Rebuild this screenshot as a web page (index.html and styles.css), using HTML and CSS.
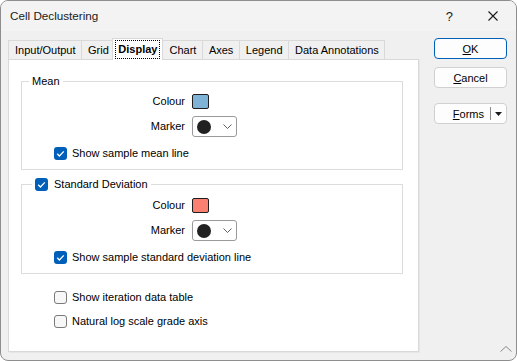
FILE: index.html
```html
<!DOCTYPE html>
<html>
<head>
<meta charset="utf-8">
<link rel="stylesheet" href="styles.css">
</head>
<body>
<div class="window">
  <div class="titlebar">
    <span class="title">Cell Declustering</span>
    <span class="help">?</span>
    <span class="close"><svg width="10" height="10" viewBox="0 0 10 10"><path d="M0.5 0.5 L9.5 9.5 M9.5 0.5 L0.5 9.5" stroke="#1a1a1a" stroke-width="1.1" fill="none"/></svg></span>
  </div>
  <div class="body">
    <div class="main">
      <div class="tabs">
        <div class="tab">Input/Output</div>
        <div class="tab">Grid</div>
        <div class="tab active"><span class="focus">Display</span></div>
        <div class="tab">Chart</div>
        <div class="tab">Axes</div>
        <div class="tab">Legend</div>
        <div class="tab">Data Annotations</div>
      </div>
      <div class="panel">
        <fieldset class="group">
          <legend class="legend legend-text">Mean</legend>
          <div class="fields">
            <span class="lbl">Colour</span><span class="swatch swatch-blue"></span>
            <span class="lbl">Marker</span>
            <span class="combo"><span class="dot"></span><svg class="chev" width="9" height="5" viewBox="0 0 9 5"><path d="M0.5 0.5 L4.5 4.5 L8.5 0.5" stroke="#606060" stroke-width="1" fill="none"/></svg></span>
          </div>
          <div class="check check-in"><span class="box checked"><svg width="13" height="13" viewBox="0 0 13 13"><path d="M3.2 6.8 L5.4 9 L9.8 4.4" stroke="#fff" stroke-width="1.3" fill="none"/></svg></span>Show sample mean line</div>
        </fieldset>
        <fieldset class="group group-sd">
          <legend class="legend legend-check"><span class="check"><span class="box checked"><svg width="13" height="13" viewBox="0 0 13 13"><path d="M3.2 6.8 L5.4 9 L9.8 4.4" stroke="#fff" stroke-width="1.3" fill="none"/></svg></span>Standard Deviation</span></legend>
          <div class="fields fields-sd">
            <span class="lbl">Colour</span><span class="swatch swatch-red"></span>
            <span class="lbl">Marker</span>
            <span class="combo"><span class="dot"></span><svg class="chev" width="9" height="5" viewBox="0 0 9 5"><path d="M0.5 0.5 L4.5 4.5 L8.5 0.5" stroke="#606060" stroke-width="1" fill="none"/></svg></span>
          </div>
          <div class="check check-in"><span class="box checked"><svg width="13" height="13" viewBox="0 0 13 13"><path d="M3.2 6.8 L5.4 9 L9.8 4.4" stroke="#fff" stroke-width="1.3" fill="none"/></svg></span>Show sample standard deviation line</div>
        </fieldset>
        <div class="options">
          <div class="check"><span class="box"></span>Show iteration data table</div>
          <div class="check"><span class="box"></span>Natural log scale grade axis</div>
        </div>
      </div>
    </div>
    <div class="buttons">
      <div class="btn btn-default"><u>O</u>K</div>
      <div class="btn"><u>C</u>ancel</div>
      <div class="btn btn-split"><span class="split-text"><u>F</u>orms</span><span class="split-div"></span><span class="split-arrow"><svg width="7" height="4" viewBox="0 0 7 4"><path d="M0 0 L7 0 L3.5 4 Z" fill="#1a1a1a"/></svg></span></div>
    </div>
  </div>
  <svg class="grip" width="12" height="6" viewBox="0 0 12 6"><path d="M0.5 5.5 L6 0.5 L11.5 5.5" stroke="#8a8a8a" stroke-width="1" fill="none"/></svg>
</div>
</body>
</html>
```

FILE: styles.css
```css
* { box-sizing: border-box; }
html, body { margin: 0; padding: 0; background: #fff; }
body {
  font-family: "Liberation Sans", Arial, sans-serif;
  font-size: 11px;
  color: #000;
}
.window {
  position: relative;
  width: 517px;
  height: 361px;
  border: 1px solid #8e8e8e;
  border-radius: 8px;
  overflow: hidden;
  background: #f0f0f0;
}
.titlebar {
  height: 30px;
  background: #f3f3f3;
  display: flex;
  align-items: center;
  padding-left: 9px;
}
.title {
  font-size: 11.7px;
  color: #1a1a1a;
  flex: 1;
  padding-bottom: 1px;
}
.help {
  font-size: 13px;
  color: #1a1a1a;
  margin-right: 35px;
}
.close {
  display: flex;
  margin-right: 18px;
  padding-bottom: 1px;
}
.body {
  display: flex;
  padding: 7px 0 0 7px;
}
.main {
  width: 411px;
  display: flex;
  flex-direction: column;
}
.tabs {
  display: flex;
  align-items: flex-end;
  height: 21px;
  position: relative;
  z-index: 1;
}
.tab {
  height: 19px;
  line-height: 18px;
  padding: 0 5.5px 0 6px;
  border: 1px solid #d9d9d9;
  border-bottom: none;
  background: #f0f0f0;
  margin-right: -1px;
  white-space: nowrap;
}
.tab.active {
  height: 22px;
  margin: 0 -1px -1px -2px;
  padding: 1px 2px 0;
  background: #fff;
  font-weight: bold;
  position: relative;
  z-index: 2;
}
.focus {
  display: block;
  border: 1px dotted #000;
  line-height: 17px;
  padding: 0 2px;
}
.panel {
  height: 293px;
  border: 1px solid #d9d9d9;
  box-shadow: 1px 1px 0 #e6e6e6;
  background: #fff;
  padding: 0 15px 0 12px;
}
.group {
  margin: 13px 0 0;
  padding: 0 0 8px;
  border: 1px solid #dcdcdc;
  min-width: 0;
}
.group-sd { margin-top: 6px; }
.legend {
  line-height: 16px;
  padding: 0 3px;
}
.legend-text { margin-left: 7px; }
.legend-check { margin-left: 10px; }
.fields {
  display: grid;
  grid-template-columns: 163px auto;
  column-gap: 7px;
  row-gap: 7px;
  align-items: center;
  margin-top: 5px;
  justify-content: start;
}
.fields-sd { margin-top: 6px; }
.lbl {
  text-align: right;
  line-height: 15px;
}
.swatch {
  width: 17px;
  height: 15px;
  border: 1px solid #1e1e1e;
  border-radius: 2px;
}
.swatch-blue { background: #7fb3d6; }
.swatch-red { background: #fa8072; }
.combo {
  width: 45px;
  height: 21px;
  border: 1px solid #9a9a9a;
  border-radius: 3px;
  background: #fff;
  display: flex;
  align-items: center;
  padding-left: 4px;
}
.dot {
  width: 14px;
  height: 14px;
  border-radius: 50%;
  background: #212121;
}
.chev { margin-left: 12px; }
.check {
  display: flex;
  align-items: center;
  line-height: 16px;
  white-space: nowrap;
}
.check-in {
  margin-top: 8px;
  padding-left: 32px;
}
.box {
  width: 13px;
  height: 13px;
  border-radius: 3px;
  border: 1px solid #7a7a7a;
  background: #f7f7f7;
  margin-right: 5px;
  display: flex;
}
.box.checked {
  border: none;
  background: #005fb8;
}
.legend-check .box { margin-right: 6px; }
.options {
  margin-top: 15px;
  padding-left: 33px;
  display: flex;
  flex-direction: column;
  gap: 8px;
}
.buttons {
  margin-left: 15px;
  width: 73px;
  display: flex;
  flex-direction: column;
}
.btn {
  height: 21px;
  border: 1px solid #d0d0d0;
  border-radius: 4px;
  background: #fdfdfd;
  display: flex;
  align-items: center;
  justify-content: center;
  margin-bottom: 8px;
}
.btn-default { border-color: #005fb8; }
.btn-split {
  margin-top: 7px;
  justify-content: flex-start;
}
.split-text {
  width: 55px;
  text-align: right;
  padding-right: 6px;
}
.split-div {
  width: 1px;
  height: 13px;
  background: #8a8a8a;
}
.split-arrow {
  display: flex;
  margin-left: 4px;
}
.grip {
  position: absolute;
  right: 4px;
  bottom: 8px;
}
```
